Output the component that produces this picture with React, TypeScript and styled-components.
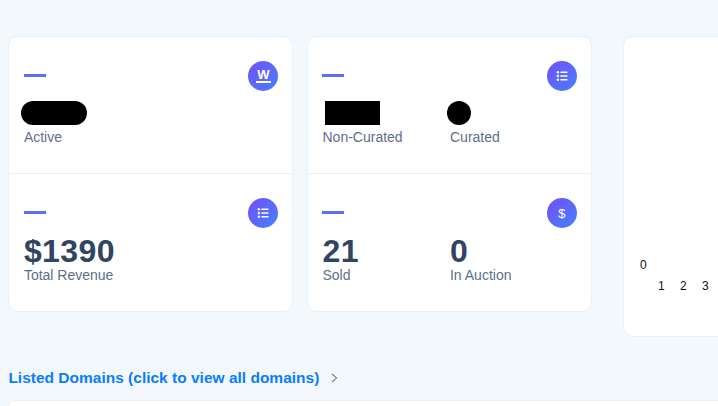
import React from 'react';
import styled, { createGlobalStyle } from 'styled-components';

const GlobalStyle = createGlobalStyle`
    html, body {
        margin: 0;
        height: 100%;
        overflow: hidden;
        background: #f3f8fc;
        font-family: 'Liberation Sans', Arial, sans-serif;
    }
`;

const Page = styled.div`
    width: 718px;
    height: 406px;
    padding: 36px 0 0 8.4px;
    box-sizing: border-box;
    overflow: hidden;
`;

const CardRow = styled.div`
    display: flex;
    align-items: flex-start;
    gap: 13.6px;
    width: 900px;
`;

const Card = styled.div`
    width: 285px;
    height: 276px;
    box-sizing: border-box;
    background: #fff;
    border: 1px solid #e8f0f8;
    border-radius: 10px;
    flex-shrink: 0;
`;

const Cell = styled.div<{ $divided?: boolean }>`
    display: flex;
    flex-direction: column;
    height: 137px;
    box-sizing: border-box;
    padding: 24px 14px 0 14.5px;
    border-bottom: ${(p) => (p.$divided ? '1px solid #e8f0f8' : 'none')};
`;

const CellHead = styled.div`
    display: flex;
    justify-content: space-between;
    align-items: center;
    height: 30px;
    margin-bottom: 6px;
`;

const Dash = styled.span`
    width: 22px;
    height: 3px;
    margin-bottom: 1px;
    background: #5b6cff;
`;

const IconCircle = styled.div`
    width: 30px;
    height: 30px;
    border-radius: 50%;
    background: linear-gradient(135deg, #7350f7, #467fff);
    color: #fff;
    display: flex;
    align-items: center;
    justify-content: center;
`;

const WordMark = styled.span`
    font-size: 13px;
    font-weight: 700;
    line-height: 12px;
    border-bottom: 2px solid #fff;
    padding: 0 1px;
`;

const Dollar = styled.span`
    font-size: 13px;
    font-weight: 400;
`;

const Stats = styled.div`
    display: grid;
    grid-template-columns: 127.5px 1fr;
`;

const Value = styled.div`
    font-size: 32px;
    line-height: 32px;
    font-weight: 700;
    letter-spacing: 0.4px;
    color: #2f4562;
    padding-top: 1px;
`;

const Hidden = styled.div<{ $width: number; $shift: number; $radius: number }>`
    width: ${(p) => p.$width}px;
    height: 24px;
    margin: 4px 0 4px ${(p) => p.$shift}px;
    background: #000;
    border-radius: ${(p) => p.$radius}px;
`;

const Label = styled.div`
    font-size: 14px;
    line-height: 16px;
    color: #5c7089;
`;

const ChartCard = styled(Card)`
    height: 301px;
    margin-left: 17.4px;
`;

const ChartSvg = styled.svg`
    display: block;
    width: 283px;
    height: 299px;
`;

const AxisText = styled.text`
    font-size: 12px;
    fill: #111;
`;

const SectionTitle = styled.div`
    display: flex;
    align-items: center;
    gap: 12px;
    margin-top: 32px;
    height: 18px;
`;

const TitleLink = styled.span`
    font-size: 15.5px;
    font-weight: 700;
    color: #0a7cff;
`;

const TableCard = styled.div`
    margin-top: 13px;
    height: 40px;
    width: 720px;
    background: #fff;
    border: 1px solid #e8f0f8;
    border-radius: 6px 0 0 0;
`;

const ListIcon = () => (
    <svg width="12" height="12" viewBox="0 0 14 14" fill="#fff">
        <circle cx="2.2" cy="2.6" r="1.4" />
        <circle cx="2.2" cy="7" r="1.4" />
        <circle cx="2.2" cy="11.4" r="1.4" />
        <rect x="5" y="1.7" width="8.5" height="1.7" rx="0.5" />
        <rect x="5" y="6.1" width="8.5" height="1.7" rx="0.5" />
        <rect x="5" y="10.5" width="8.5" height="1.7" rx="0.5" />
    </svg>
);

const Chevron = () => (
    <svg width="7" height="10" viewBox="0 0 7 10" fill="none" stroke="#7b8794" strokeWidth="1.1">
        <path d="M1 1 5.6 5 1 9" />
    </svg>
);

const App = (): React.ReactElement => {
    return (
        <Page>
            <GlobalStyle />
            <CardRow>
                <Card>
                    <Cell $divided>
                        <CellHead>
                            <Dash />
                            <IconCircle>
                                <WordMark>W</WordMark>
                            </IconCircle>
                        </CellHead>
                        <Hidden $width={66} $shift={-3} $radius={12} />
                        <Label>Active</Label>
                    </Cell>
                    <Cell>
                        <CellHead>
                            <Dash />
                            <IconCircle>
                                <ListIcon />
                            </IconCircle>
                        </CellHead>
                        <Value>$1390</Value>
                        <Label>Total Revenue</Label>
                    </Cell>
                </Card>
                <Card>
                    <Cell $divided>
                        <CellHead>
                            <Dash />
                            <IconCircle>
                                <ListIcon />
                            </IconCircle>
                        </CellHead>
                        <Stats>
                            <div>
                                <Hidden $width={55} $shift={3} $radius={0} />
                                <Label>Non-Curated</Label>
                            </div>
                            <div>
                                <Hidden $width={24} $shift={-3} $radius={12} />
                                <Label>Curated</Label>
                            </div>
                        </Stats>
                    </Cell>
                    <Cell>
                        <CellHead>
                            <Dash />
                            <IconCircle>
                                <Dollar>$</Dollar>
                            </IconCircle>
                        </CellHead>
                        <Stats>
                            <div>
                                <Value>21</Value>
                                <Label>Sold</Label>
                            </div>
                            <div>
                                <Value>0</Value>
                                <Label>In Auction</Label>
                            </div>
                        </Stats>
                    </Cell>
                </Card>
                <ChartCard>
                    <ChartSvg viewBox="0 0 283 299">
                        <AxisText x="16" y="232">0</AxisText>
                        <AxisText x="34" y="253">1</AxisText>
                        <AxisText x="56" y="253">2</AxisText>
                        <AxisText x="78" y="253">3</AxisText>
                    </ChartSvg>
                </ChartCard>
            </CardRow>
            <SectionTitle>
                <TitleLink>Listed Domains (click to view all domains)</TitleLink>
                <Chevron />
            </SectionTitle>
            <TableCard />
        </Page>
    );
};

export default App;
